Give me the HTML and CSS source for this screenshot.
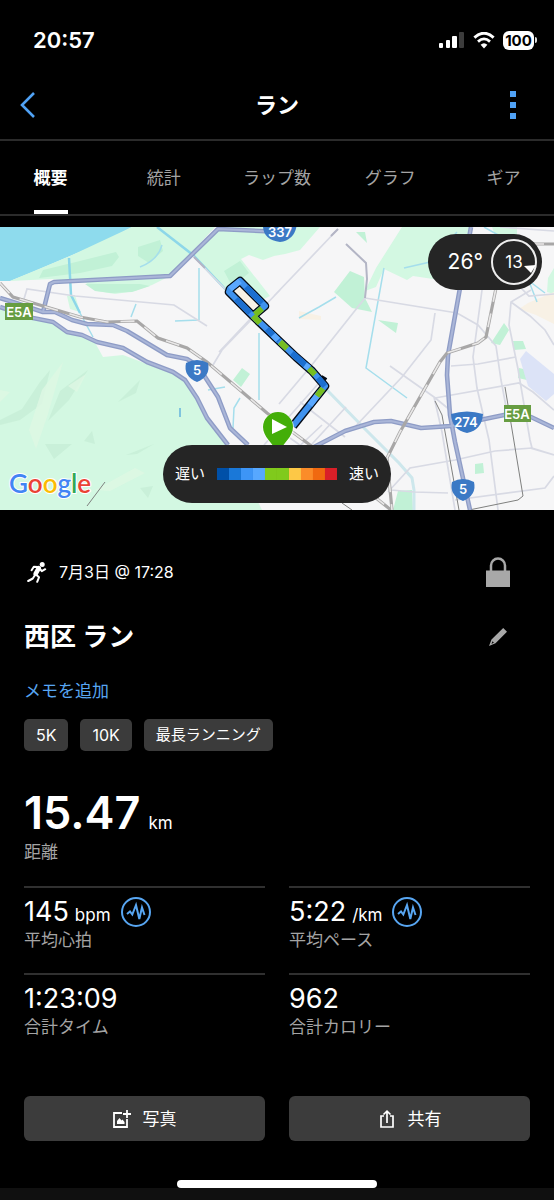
FILE: index.html
```html
<!DOCTYPE html>
<html lang="ja">
<head>
<meta charset="utf-8">
<meta name="viewport" content="width=device-width, initial-scale=1">
<title>ラン</title>
<link rel="stylesheet" href="styles.css">
</head>
<body>
<div class="status">
  <time class="clock">20:57</time>
  <div class="status-icons">
    <svg class="signal" viewBox="0 0 26 18" width="26" height="18" aria-hidden="true">
      <rect x="0" y="12" width="4" height="5" rx="1" fill="#fff"/>
      <rect x="7" y="9" width="4" height="8" rx="1" fill="#fff"/>
      <rect x="13" y="5" width="5" height="12" rx="1" fill="#fff"/>
      <rect x="20" y="1" width="5" height="16" rx="1" fill="#3c3c3c"/>
    </svg>
    <svg class="wifi" viewBox="0 0 22 17" width="22" height="17" aria-hidden="true">
      <path d="M1.400 5.600Q11-3 20.600 5.600" fill="none" stroke="#fff" stroke-width="3"/>
      <path d="M5 9.600Q11 4.200 17 9.600" fill="none" stroke="#fff" stroke-width="2.800"/>
      <path d="M7.600 12.800Q11 9.600 14.400 12.800L11 16.400Z" fill="#fff"/>
    </svg>
    <div class="battery"><span class="level">100</span><span class="cap"></span></div>
  </div>
</div>

<header class="nav">
  <button class="icon-button" type="button" aria-label="戻る">
    <svg viewBox="0 0 16 28" width="16" height="28"><path d="M14 2L2 14L14 26" fill="none" stroke="#50a2f5" stroke-width="2.600"/></svg>
  </button>
  <h1 class="nav-title">ラン</h1>
  <button class="icon-button end" type="button" aria-label="メニュー">
    <svg viewBox="0 0 6 28" width="6" height="28"><path d="M0 0h6v6H0zM0 11h6v6H0zM0 22h6v6H0z" fill="#50a2f5"/></svg>
  </button>
</header>

<nav class="tabs">
  <a class="tab active" href="#overview">概要</a>
  <a class="tab" href="#stats">統計</a>
  <a class="tab" href="#laps">ラップ数</a>
  <a class="tab" href="#graph">グラフ</a>
  <a class="tab" href="#gear">ギア</a>
</nav>

<main id="overview">
<section class="map" aria-label="地図">
<svg class="map-art" viewBox="0 227 554 283">
  <rect x="0" y="227" width="554" height="283" fill="#f6f6f7"/>
  <path fill="#8edbed" d="M0 227H132L106 241L70 256L35 271L10 281H0Z"/>
  <g fill="#d3f8e2">
    <path d="M132 227H215L170 276L152 285L135 291L115 294L97 291L86 283L52 279L10 281L70 256Z"/>
    <path d="M218 227H320L300 250L285 254L274 256L263 260L249 255L241 259L270 296L262 300L240 280L227 291L192 256Z"/>
    <path d="M402 227H470L460 281L433 279L413 276L407 280L384 269L376 287L365 291L376 268Z"/>
    <path d="M0 308L33 318L53 323L67 332L93 339L103 357L123 355L147 364L170 372L185 382L197 402L213 428L230 445L262 510H0Z"/>
    <path d="M492 227h25v8h-22zM548 278l6-10v26l-7-2zM67 296l8-1 5 17-10-3z"/>
  </g>
  <g fill="#c1f1d6">
    <path d="M39 278L43 270L80 261L116 252L119 257L112 266L80 273ZM138 247L160 240L163 251L149 263L138 256ZM85 284L140 284L150 286L132 292L111 293L95 291ZM224 271L240 261L249 273L232 286ZM350 271L364 277L365 298L372 312L352 308L334 292ZM356 232h9l2 11zM378 320l20 3-2 10z"/>
    <path d="M504 323L509 330L500 345L491 343ZM513 341h10l3 8-12 1zM519 368l9 2-1 10-9-2zM233 380L242 368L250 374L241 387ZM475 464l8-1 1 10-9 1zM398 491l14-1 1 20h-20z"/>
  </g>
  <g fill="#c6eed6" opacity=".75">
    <path d="M0 420l22-11 18-27 10-12-8 34-22 16-20 5zM48 421l12-30 28-21-19 30zM118 402l22-22-4 13zM45 444l27 0-18 15zM126 455l28-11-17 10zM140 488l8 10 5-12zM84 441l8-10 3 13z"/>
  </g>
  <g fill="#dff7e4" opacity=".8">
    <path d="M29 430l13-40 21-28-15 52-12 35zM68 386l18-12-9 18zM95 490l40-22 10 5-35 18zM10 392l-10 10v-12z"/>
  </g>
  <path fill="#f8f1e5" d="M528 303L554 292V324L536 315L519 309ZM299 311l22 5v4l-22-1zM239 284l20 22-5 6-20-21Z"/>
  <path fill="#dce3f7" d="M520 359L526 351L554 374V394L546 401L528 386Z"/>

  <g fill="none" stroke="#a5deec" stroke-width="1.500">
    <path stroke="#8dd7e9" stroke-width="2.500" d="M157 227L193 255L228 292"/>
    <path stroke="#8dd7e9" stroke-width="2.500" d="M69 258L71 295L80 313"/>
    <path d="M80 313L93 337M199 268V320M175 321L199 320M131 317l5-13M162 245q-4 15-22 22"/>
    <path d="M299 318L319 307L336 297M384 268L366 368L407 398M404 268L430 262L457 232M484 227L500 236M525 278L545 293M530 284L537 302M259 333V400M208 390l17-3M240 398l-6 10-1 20"/>
    <path stroke="#cde7ec" stroke-width="3" d="M327 390L364 428L399 463L412 478L414 490V510"/>
    <path stroke="#65b3dc" d="M180 408v9"/>
  </g>
  <g fill="none" stroke="#d8dae4" stroke-width="1.700">
    <path d="M24 299L27 289L75 296L174 305L207 326M192 255L228 292M280 290L222 350L213 365M253 316L219 352M338 229L274 296"/>
    <path d="M365 298L311 366L279 404M365 298L457 313L478 325L496 346L501 380L507 412M435 313L431 340L402 377L352 430M346 407L279 480"/>
    <path d="M482 290L473 357L477 388L489 440L498 510M531 290L511 302L509 325L518 369L530 440L532 448M511 302L530 316L545 330L554 345"/>
    <path d="M451 366L478 364L516 357M435 398L519 383L533 392L554 410M390 366L434 397L450 410M434 397L442 432L455 510"/>
    <path d="M554 455L532 448L495 451L455 460L410 468L388 492M414 492L448 493M455 500L545 488L554 476M530 448L554 455M290 438L318 458L340 480M264 445L318 384M322 425L290 455M300 402L345 437M521 288L529 296L554 294M500 227L554 231M391 490L414 492"/>
  </g>
  <path fill="none" stroke="#b3b5c5" stroke-width="2" d="M346 244L366 263L367 279L365 298M338 229L331 236M194 257L205 268"/>
  <g fill="none" stroke="#7f807f" stroke-width="1">
    <path d="M505 387L523 496L518 500L469 510M435 401L442 415L459 510M87 506L105 482M342 503l10 7"/>
  </g>

  <g fill="none" stroke="#8e9cc6" stroke-width="4.600" stroke-linejoin="round">
    <path d="M0 298L13 302L43 312L55 312L72 320L87 324L113 325L127 331L167 355L187 359L198 366L207 380L218 397L230 428L248 445"/>
    <path d="M0 307L33 318L53 322L67 332L82 335L97 342L123 348L147 362L173 372L185 380L197 398L207 418L228 445"/>
    <path d="M43 312L50 284L54 282L170 276L218 229L282 232"/>
    <path d="M471 227L460 288L448 355L447 375L450 415L455 442L470 510"/>
    <path d="M314 447L345 431L374 422L391 421L421 428L451 426L504 415L531 417L554 428"/>
  </g>
  <g fill="none" stroke="#aab6d8" stroke-width="2" stroke-linejoin="round">
    <path d="M0 298L13 302L43 312L55 312L72 320L87 324L113 325L127 331L167 355L187 359L198 366L207 380L218 397L230 428L248 445"/>
    <path d="M0 307L33 318L53 322L67 332L82 335L97 342L123 348L147 362L173 372L185 380L197 398L207 418L228 445"/>
    <path d="M43 312L50 284L54 282L170 276L218 229L282 232"/>
    <path d="M471 227L460 288L448 355L447 375L450 415L455 442L470 510"/>
    <path d="M314 447L345 431L374 422L391 421L421 428L451 426L504 415L531 417L554 428"/>
  </g>
  <g fill="none" stroke="#a8a7a7" stroke-width="3.200">
    <path d="M0 283L13 297L80 317L107 322L137 321L158 338L187 348L207 362L267 413L310 445L391 510"/>
    <path d="M496 288L486 337L478 343L447 353L440 362L400 432L387 458L392 510M530 244H554"/>
  </g>
  <g fill="none" stroke="#e9e8e8" stroke-width="1.600" stroke-dasharray="14 12">
    <path d="M0 283L13 297L80 317L107 322L137 321L158 338L187 348L207 362L267 413L310 445L391 510"/>
    <path d="M496 288L486 337L478 343L447 353L440 362L400 432L387 458L392 510M530 244H554"/>
  </g>

  <g fill="none" stroke-linejoin="round">
    <path stroke="#050b16" stroke-width="8.600" d="M253 316L229 292L230 289L240 281L265 306L253 316L296 357L312 371L325 386L293 426M309 369l2 1M320 379l5 3"/>
    <path stroke="#3f92ee" stroke-width="6" d="M253 316L229 292L230 289L240 281L265 306L253 316L296 357L312 371L325 386L293 426"/>
    <path stroke="#1c6fd0" stroke-width="6" d="M246 287L262 303M236 299L250 313M267 329L279 341M292 353L309 368M318 378L325 386"/>
    <path stroke="#5aa8ff" stroke-width="6" d="M230 289L240 281M273 335L278 340M305 365l4 3M320 392l-10 13"/>
    <path stroke="#77be20" stroke-width="6" d="M262 308.500L255 314.500M253 316L260 323M280 342L287 348.500M309 368.500L315 374.500M323 388.500L317 396"/>
  </g>

  <path fill="#fff" opacity=".7" d="M262 428a16 16 0 1 1 32 0c0 10-11 15-14 24h-4c-3-9-14-14-14-24Z"/>
  <path fill="#43ae08" d="M263 427a15 15 0 1 1 30 0c0 10-10 16-13 24h-4c-3-8-13-14-13-24Z"/>
  <path fill="#fff" d="M272 419V434L287 427Z"/>

  <g fill="#3b79c5">
    <path d="M186 363Q197 357 208 363Q211 376 197 382Q183 376 186 363Z"/>
    <path d="M263 222H297Q296 240 280 242Q264 240 263 227Z"/>
    <path d="M451 414Q467 409 483 414Q482 430 467 433Q452 430 451 414Z"/>
    <path d="M452 482Q463 476 474 482Q477 495 463 501Q449 495 452 482Z"/>
  </g>
  <path fill="#679d42" d="M5 303h28v17H5zM504 405h27v17h-27z"/>
  <g class="road-label" fill="#fff" text-anchor="middle">
    <text x="197" y="375">5</text><text x="280" y="237">337</text>
    <text x="466" y="427">274</text><text x="463" y="494">5</text>
    <text x="19" y="317">E5A</text><text x="517" y="419">E5A</text>
  </g>
  <text class="map-brand" x="9" y="493"><tspan fill="#4285f4">G</tspan><tspan fill="#ea4335">o</tspan><tspan fill="#fbbc05">o</tspan><tspan fill="#4285f4">g</tspan><tspan fill="#34a853">l</tspan><tspan fill="#ea4335">e</tspan></text>
</svg>
  <div class="weather">
    <span class="temp">26°</span>
    <div class="wind">
      <svg class="wind-ring" viewBox="0 0 46 46" aria-hidden="true"><circle cx="23" cy="23" r="22" fill="none" stroke="#eee" stroke-width="2"/><path d="M33 27L45 26L40 34Z" fill="#fff"/></svg>
      <span class="wind-value">13</span>
    </div>
  </div>
  <div class="legend">
    <span>遅い</span>
    <div class="scale"><i class="c1"></i><i class="c2"></i><i class="c3"></i><i class="c4"></i><i class="c5"></i><i class="c5"></i><i class="c6"></i><i class="c7"></i><i class="c8"></i><i class="c9"></i></div>
    <span>速い</span>
  </div>
</section>

<section class="info">
  <div class="row meta">
    <svg class="runner" viewBox="0 0 20 21" width="20" height="21" aria-hidden="true">
      <circle cx="15.200" cy="2.500" r="2.500" fill="#fff"/>
      <path d="M11.800 6.200L8.600 11.800" stroke="#fff" stroke-width="4.600" stroke-linecap="round"/>
      <g fill="none" stroke="#fff" stroke-linecap="round" stroke-linejoin="round" stroke-width="2"><path d="M11 5L6.800 4.800L4.600 8.200M13 7L14.800 9.200L18.200 7.200M8 13L5.800 16.500L1.200 19M9 12.500L12 15.300L10.200 19.800"/></g>
    </svg>
    <time class="date">7月3日 @ 17:28</time>
    <svg class="lock" viewBox="0 0 24 30" width="24" height="30" role="img" aria-label="非公開"><path d="M0 13.500H24V30H0Z" fill="#a8a8a8"/><path d="M5 14V8.500a7 7 0 0 1 14 0V14" fill="none" stroke="#a8a8a8" stroke-width="2.500"/></svg>
  </div>
  <div class="row title-row">
    <h2 class="title">西区 ラン</h2>
    <button class="edit" type="button" aria-label="編集"><svg viewBox="0 0 18 18" width="18" height="18"><path d="M14.200 0L18 3.800L6.500 15.300L0 18L2.500 11.500ZM3.500 13.200L2.500 16L4.900 14.600Z" fill="#a8a8a8" fill-rule="evenodd"/></svg></button>
  </div>
  <a class="memo" href="#memo">メモを追加</a>
  <div class="chips">
    <span class="chip short">5K</span><span class="chip short">10K</span><span class="chip">最長ランニング</span>
  </div>
  <div class="distance"><span class="big">15.47</span><span class="unit">km</span></div>
  <div class="label">距離</div>

  <div class="stats">
    <div class="stat">
      <div class="value"><span>145</span><span class="unit">bpm</span>
        <button class="chart" type="button" aria-label="心拍グラフ"><svg viewBox="0 0 30 30" width="30" height="30"><circle cx="15" cy="15" r="14" fill="none" stroke="#58a6f2" stroke-width="2"/><path d="M6 17L9 14.500L11.300 17.500L15 8L18.300 22L21 10.500L23.500 18" fill="none" stroke="#58a6f2" stroke-width="2"/></svg></button>
      </div>
      <div class="label">平均心拍</div>
    </div>
    <div class="stat">
      <div class="value"><span>5:22</span><span class="unit">/km</span>
        <button class="chart" type="button" aria-label="ペースグラフ"><svg viewBox="0 0 30 30" width="30" height="30"><circle cx="15" cy="15" r="14" fill="none" stroke="#58a6f2" stroke-width="2"/><path d="M6 17L9 14.500L11.300 17.500L15 8L18.300 22L21 10.500L23.500 18" fill="none" stroke="#58a6f2" stroke-width="2"/></svg></button>
      </div>
      <div class="label">平均ペース</div>
    </div>
    <div class="stat"><div class="value">1:23:09</div><div class="label">合計タイム</div></div>
    <div class="stat"><div class="value">962</div><div class="label">合計カロリー</div></div>
  </div>

  <div class="actions">
    <button class="action" type="button">
      <svg viewBox="0 0 18 18" width="18" height="18" aria-hidden="true"><path d="M9 3H1V17H14V9M14 0V8M10 4H18" fill="none" stroke="#fff" stroke-width="1.800"/><path d="M4 14V11L6.500 8L8.500 10.500L9.500 9.500L11.500 12V14Z" fill="#fff"/></svg>
      <span>写真</span>
    </button>
    <button class="action" type="button">
      <svg viewBox="0 0 18 18" width="18" height="18" aria-hidden="true"><path d="M6 6H3V17H15V6H12M9 13V1.500M5.500 4.500L9 1.200L12.500 4.500" fill="none" stroke="#fff" stroke-width="1.700"/></svg>
      <span>共有</span>
    </button>
  </div>
</section>
</main>
<footer class="bottom"><div class="home"></div></footer>
</body>
</html>
```
FILE: styles.css
```css
* { box-sizing: border-box; }
body {
  margin: 0;
  min-height: 100vh;
  display: flex;
  flex-direction: column;
  overflow-x: hidden;
  background: #000;
  color: #fff;
  font: 17px/24px Inter, "Noto Sans CJK JP", sans-serif;
}
button {
  border: 0;
  padding: 0;
  background: none;
  color: inherit;
  font: inherit;
  cursor: pointer;
}
a { color: inherit; text-decoration: none; }
svg { display: block; flex: none; }
h1, h2 { margin: 0; }

.status {
  display: flex;
  align-items: center;
  justify-content: space-between;
  height: 80px;
  padding: 0 17px 0 33px;
}
.clock { font-size: 22px; font-weight: 600; }
.status-icons { display: flex; align-items: center; gap: 8px; }
.battery { display: flex; align-items: center; gap: 1px; }
.level {
  width: 31px;
  border-radius: 6px;
  background: #fff;
  color: #000;
  font-size: 15px;
  font-weight: 700;
  line-height: 19px;
  text-align: center;
}
.cap { width: 2px; height: 6px; border-radius: 0 2px 2px 0; background: #ddd; }

.nav {
  display: grid;
  grid-template-columns: 1fr auto 1fr;
  align-items: center;
  height: 61px;
  padding: 0 38px 10px 20px;
  border-bottom: 2px solid #2b2b2b;
}
.nav-title { padding-left: 18px; font-size: 22px; line-height: 32px; }
.icon-button { justify-self: start; }
.icon-button.end { justify-self: end; }

.tabs {
  display: grid;
  grid-template-columns: repeat(5, 1fr);
  height: 75px;
  margin: 0 -6px;
  padding-top: 1px;
  border-bottom: 2px solid #2b2b2b;
  color: #a4a4a4;
}
.tab { display: flex; justify-content: center; align-items: center; }
.tab.active {
  justify-self: center;
  border-bottom: 4px solid #fff;
  border-top: 4px solid transparent;
  color: #fff;
  font-weight: 700;
}

.map { position: relative; margin-top: 11px; }
.map-art { width: 100%; height: auto; }
.road-label { font: 600 13px Inter, sans-serif; }
.map-brand {
  font: 600 26px Lato, sans-serif;
  stroke: #fff;
  stroke-width: 2px;
  stroke-linejoin: round;
  paint-order: stroke;
}
.weather, .legend {
  position: absolute;
  display: flex;
  align-items: center;
  background: #252525;
}
.weather {
  top: 7px;
  right: 12px;
  gap: 8px;
  padding: 5px 5px 5px 20px;
  border-radius: 28px;
}
.temp { font-size: 21px; }
.wind { position: relative; display: grid; place-items: center; width: 46px; height: 46px; }
.wind-ring { position: absolute; inset: 0; }
.legend {
  bottom: 7px;
  left: 50%;
  transform: translateX(-50%);
  gap: 12px;
  height: 58px;
  padding: 0 12px;
  border-radius: 29px;
  font-size: 15px;
  white-space: nowrap;
}
.scale { display: flex; height: 12px; }
.scale i { width: 12px; }
.c1 { background: #0050a8; }
.c2 { background: #1a78d8; }
.c3 { background: #3d95f6; }
.c4 { background: #57a8ff; }
.c5 { background: #80ca1c; }
.c6 { background: #fdc846; }
.c7 { background: #fb8c29; }
.c8 { background: #f06910; }
.c9 { background: #d91f28; }

.info { padding: 47px 24px 0; }
.row { display: flex; align-items: center; }
.meta { height: 30px; padding: 0 20px 0 3px; }
.date { margin-left: 12px; font-size: 16px; }
.lock { margin-left: auto; }
.title-row { justify-content: space-between; height: 40px; margin-top: 30px; padding-right: 23px; }
.title { font-size: 26px; line-height: 40px; }
.memo { display: block; width: fit-content; margin-top: 22px; color: #58a6f2; }
.chips { display: flex; gap: 12px; margin-top: 16px; }
.chip {
  padding: 0 12px;
  border-radius: 5px;
  background: #3b3b3b;
  font-size: 15px;
  line-height: 32px;
}
.chip.short { font-size: 16px; }
.distance { display: flex; align-items: baseline; gap: 8px; margin-top: 45px; line-height: 34px; }
.big { font-size: 45px; font-weight: 600; }
.label { color: #a4a4a4; }
.stats {
  display: grid;
  grid-template-columns: 1fr 1fr;
  column-gap: 24px;
  margin-top: 22px;
}
.stat { height: 87px; border-top: 2px solid #303030; padding-top: 8px; }
.value { display: flex; align-items: baseline; gap: 6px; height: 32px; font-size: 27px; line-height: 32px; }
.unit { font-size: 17px; }
.chart { align-self: center; margin-left: 4px; }
.actions { display: grid; grid-template-columns: 1fr 1fr; gap: 24px; margin-top: 36px; }
.action {
  display: flex;
  align-items: center;
  justify-content: center;
  gap: 12px;
  height: 45px;
  border-radius: 6px;
  background: #3c3c3c;
}
.bottom {
  margin-top: auto;
  padding-bottom: 12px;
  background: linear-gradient(to top, #101010 12px, #000 12px);
}
.home { width: 36%; height: 8px; margin: 0 auto; border-radius: 4px; background: #fff; }
```
